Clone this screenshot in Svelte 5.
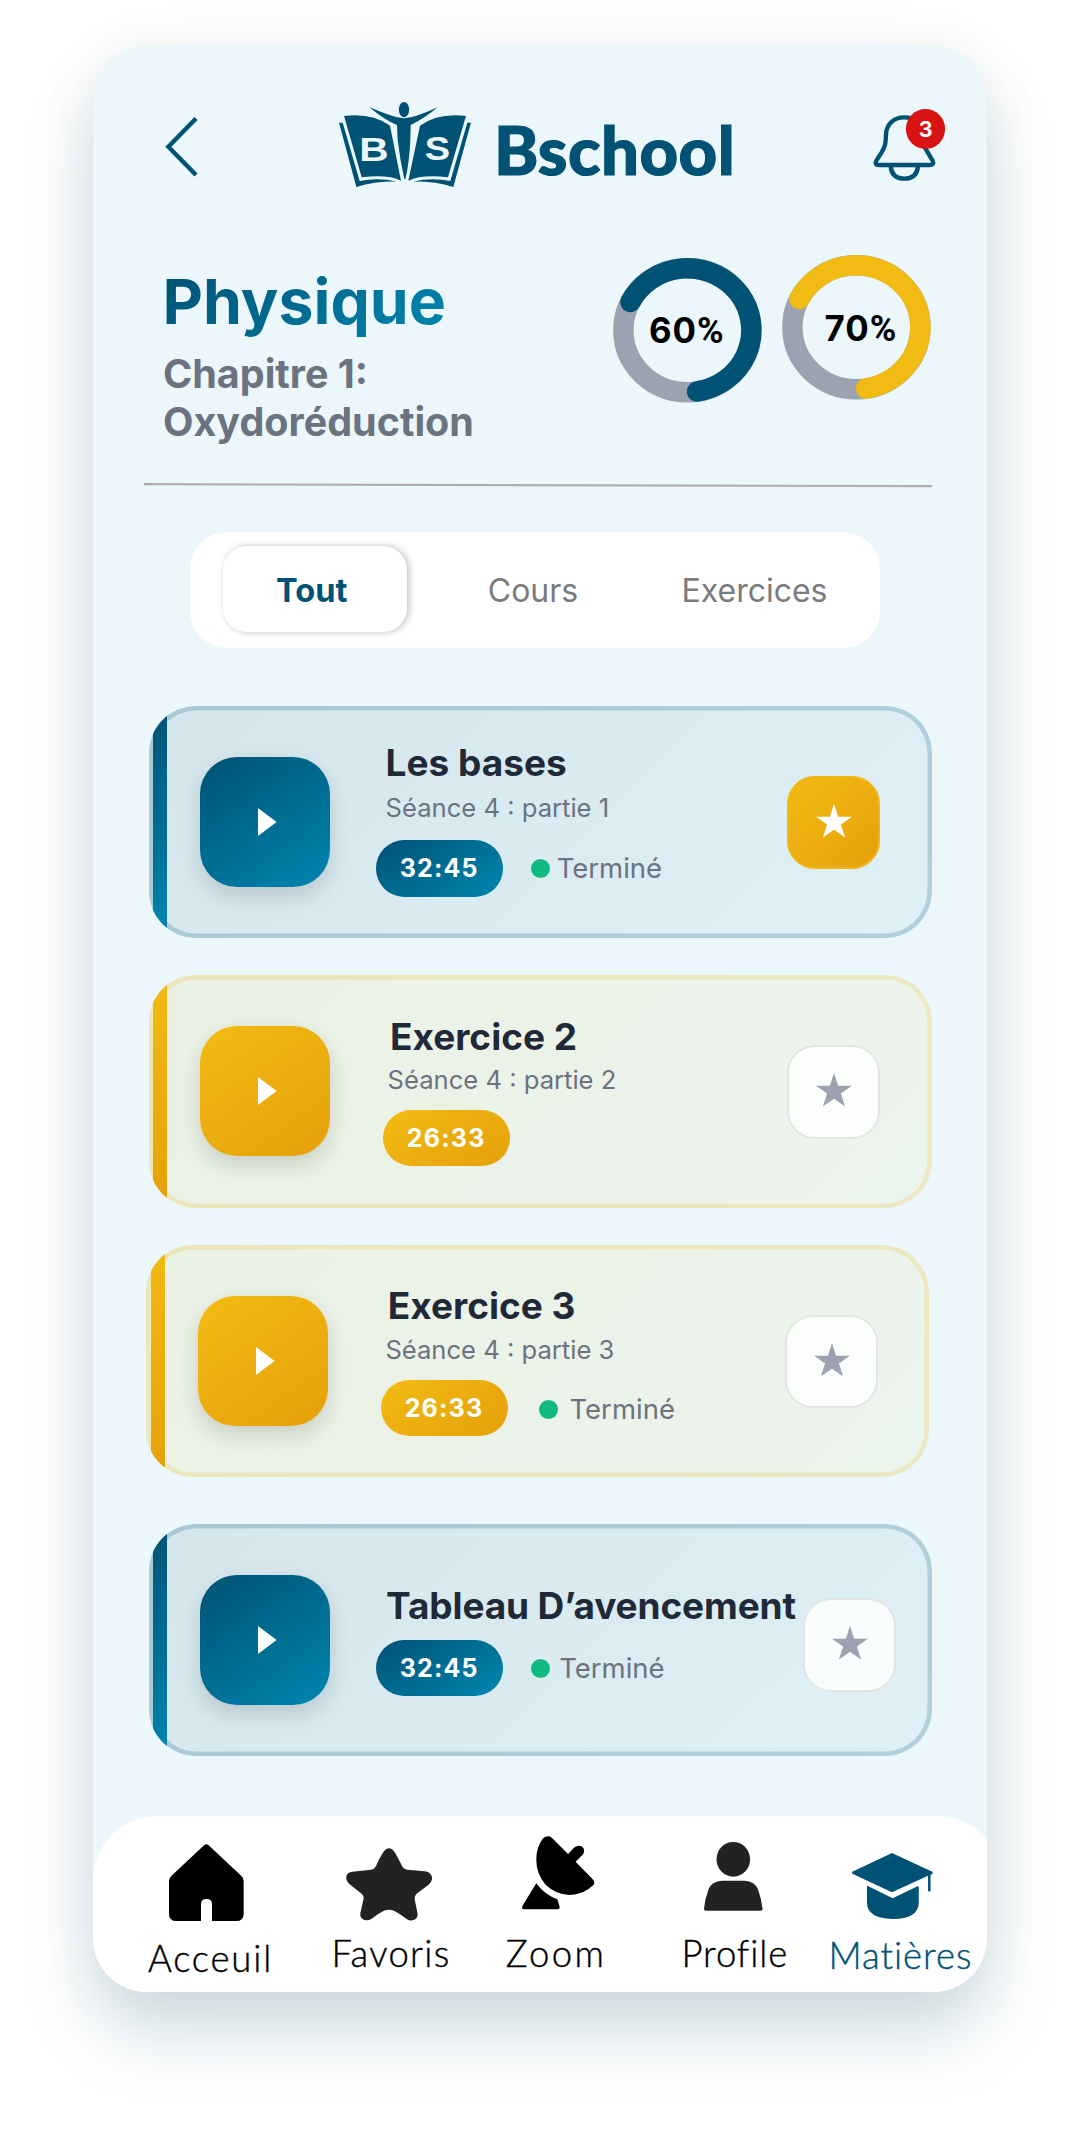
<script>
  const tabs = [
    { label: 'Tout', kind: 'active' },
    { label: 'Cours', kind: 'middle' },
    { label: 'Exercices', kind: 'last' }
  ];

  const lessons = [
    { title: 'Les bases', subtitle: 'Séance 4 : partie 1', time: '32:45', done: true, starred: true, tone: 'blue', variant: 'lesson' },
    { title: 'Exercice 2', subtitle: 'Séance 4 : partie 2', time: '26:33', done: false, starred: false, tone: 'gold', variant: 'exercise' },
    { title: 'Exercice 3', subtitle: 'Séance 4 : partie 3', time: '26:33', done: true, starred: false, tone: 'gold', variant: 'exercise shifted' },
    { title: 'Tableau D’avencement', subtitle: '', time: '32:45', done: true, starred: false, tone: 'blue', variant: 'progress' }
  ];
</script>

<main class="phone">
  <header class="header">
    <button class="back" aria-label="Retour">
      <svg width="32" height="60" viewBox="0 0 32 60"><path d="M30 1.5L2.4 29.8L30 58" fill="none" stroke="#005274" stroke-width="4.4" /></svg>
    </button>
    <svg class="logo" width="132" height="85.3" viewBox="57 36 396 256">
      <g fill="#005274">
        <ellipse cx="252" cy="59" rx="15.5" ry="23" />
        <path d="M148 51Q200 74 232 82Q252 87 272 82Q305 74 354 51Q315 84 272 105L271 150Q268 220 256 267H253Q240 210 233 150L231 105Q190 88 148 51Z" />
        <path d="M72 78Q155 68 210 107L243 272Q205 253 125 262Z" />
        <path d="M438 78Q355 68 300 107L265 272Q305 253 384 262Z" />
        <path d="M57 98H68L119 273Q175 262 232 275Q165 274 109 291Z" />
        <path d="M453 98H442L391 273Q335 262 277 275Q345 274 400 291Z" />
      </g>
      <text class="mono" x="118" y="214" textLength="88" lengthAdjust="spacingAndGlyphs">B</text>
      <text class="mono" x="314" y="211" textLength="76" lengthAdjust="spacingAndGlyphs">S</text>
    </svg>
    <span class="brand">Bschool</span>
    <div class="bell">
      <svg width="63.3" height="67.3" viewBox="940 100 190 202" fill="none" stroke="#005274" stroke-width="13">
        <path d="M1034 110C1000 110 979 133 979 163C978 190 976 198 966 215L950 240Q943 253 957 253H1111Q1125 253 1119 240L1101 210C1092 195 1090 190 1089 163C1089 133 1066 110 1034 110Z" />
        <path d="M993 256C995 284 1012 294 1034 294C1056 294 1073 284 1075 256" />
      </svg>
      <span class="badge">3</span>
    </div>
  </header>

  <section class="summary">
    <div class="heading">
      <h1>Physique</h1>
      <p>Chapitre 1:<br />Oxydoréduction</p>
    </div>
    <div class="ring first">
      <svg width="149" height="145" viewBox="0 0 149 145" fill="none" stroke-width="20.5">
        <ellipse cx="74.4" cy="72.2" rx="64" ry="62" stroke="#9da2b0" />
        <path d="M17.4 44A64 62 0 1 1 84 133.5" stroke="#005274" stroke-linecap="round" />
      </svg>
      <span class="pct">60<span class="sign">%</span></span>
    </div>
    <div class="ring second">
      <svg width="149" height="145" viewBox="0 0 149 145" fill="none" stroke-width="20.5">
        <ellipse cx="74.4" cy="72.2" rx="64" ry="62" stroke="#9da2b0" />
        <path d="M17.4 44A64 62 0 1 1 84 133.5" stroke="#f2bb13" stroke-linecap="round" />
      </svg>
      <span class="pct">70<span class="sign">%</span></span>
    </div>
  </section>

  <svg class="divider" width="788" height="5" viewBox="0 0 788 5"><path d="M0 1.2L788 3.2" stroke="#aeacac" stroke-width="2.2" /></svg>

  <nav class="tabs">
    {#each tabs as tab}
      <button class="tab {tab.kind}">{tab.label}</button>
    {/each}
  </nav>

  <section class="cards">
    {#each lessons as lesson}
      <article class="card {lesson.tone} {lesson.variant}">
        <span class="stripe"></span>
        <button class="play" aria-label="Lire">
          <svg width="19" height="28" viewBox="0 0 19 28"><path d="M0 0L18.6 14L0 28Z" fill="#fff" /></svg>
        </button>
        <div class="body">
          <h2>{lesson.title}</h2>
          {#if lesson.subtitle}<p class="subtitle">{lesson.subtitle}</p>{/if}
          <div class="meta">
            <span class="time">{lesson.time}</span>
            {#if lesson.done}
              <span class="dot"></span>
              <span class="status">Terminé</span>
            {/if}
          </div>
        </div>
        <button class="fav" class:starred={lesson.starred} aria-label="Favori">
          <svg width="36" height="34" viewBox="0 0 36 34"><path d="M18 0L22.2 12.8H36L24.9 20.6L29.1 33.6L18 25.7L6.9 33.6L11.1 20.6L0 12.8H13.8Z" fill="currentColor" /></svg>
        </button>
      </article>
    {/each}
  </section>

  <nav class="bottom">
    <a class="item home" href="#accueil">
      <svg width="74.7" height="77" viewBox="298 161 224 231"><path d="M404 164Q410 159 416 164L516 258Q522 264 522 272V370Q522 392 500 392H427V342Q427 326 410.5 326Q394 326 394 342V392H320Q298 392 298 370V272Q298 264 304 258Z" fill="#000" /></svg>
      <span>Acceuil</span>
    </a>
    <a class="item favoris" href="#favoris">
      <svg width="86.3" height="72.7" viewBox="828 175 259 218"><path d="M937 192Q957 160 977 192Q986 208 998 232Q1002 239 1012 240L1064 245Q1082 247 1086 262Q1088 274 1076 285L1040 312Q1033 318 1034 328L1043 372Q1044 388 1028 392Q1018 394 1010 388Q990 372 972 363Q957 357 942 363Q925 371 905 387Q894 394 884 391Q869 387 871 371L881 326Q882 318 875 312L839 284Q826 273 829 260Q832 247 848 246L902 240Q913 239 917 231Q927 207 937 192Z" fill="#222" /></svg>
      <span>Favoris</span>
    </a>
    <a class="item zoom" href="#zoom">
      <svg width="72.5" height="73.3" viewBox="91 137 203 220" preserveAspectRatio="none">
        <path d="M149 145Q153 139 164 138Q171 137 175 143L220 191L238 171Q250 162 260 170Q269 179 262 192L241 214L291 269Q296 277 291 284Q262 314 224 314Q185 312 157 283Q131 250 131 208Q131 170 149 145Z" />
        <path d="M131 279Q155 314 190 327L196 347Q198 357 190 357H97Q89 357 92 347Z" />
      </svg>
      <span>Zoom</span>
    </a>
    <a class="item profile" href="#profile">
      <svg width="58.6" height="68.7" viewBox="598 156 164 206" preserveAspectRatio="none" fill="#222">
        <ellipse cx="680" cy="208" rx="47" ry="52" />
        <path d="M648 272H712Q740 274 749 298Q759 328 762 356Q762 362 756 362H604Q598 362 598 356Q601 325 611 297Q620 274 648 272Z" />
      </svg>
      <span>Profile</span>
    </a>
    <a class="item matieres" href="#matieres">
      <svg width="80.7" height="66.4" viewBox="1013 190 226 199" preserveAspectRatio="none" fill="#005274">
        <path d="M1125 190L1238 246Q1240 250 1238 253L1233 256V304Q1229 307 1226 304V258L1125 308L1014 252Q1012 249 1014 246Z" />
        <path d="M1056 288L1127 326L1198 289Q1200 290 1200 293V340Q1198 388 1127 388Q1056 386 1055 340V290Z" />
      </svg>
      <span>Matières</span>
    </a>
  </nav>
</main>

<style>
  :global(body) {
    margin: 0;
    background: #fff;
    font-family: Inter, 'Liberation Sans', sans-serif;
  }

  :global(#app) {
    display: flow-root;
    height: 2133px;
    overflow: hidden;
  }

  button {
    padding: 0;
    border: 0;
    background: none;
    font: inherit;
    color: inherit;
  }

  svg {
    display: block;
    flex: none;
    overflow: visible;
  }

  h1,
  h2,
  p {
    margin: 0;
  }

  .phone {
    display: flex;
    flex-direction: column;
    box-sizing: border-box;
    width: 894px;
    height: 1946px;
    margin: 46.4px 0 0 93px;
    overflow: hidden;
    border-radius: 54px;
    background: #ebf7fb;
    box-shadow:
      0 42px 72px rgba(0, 82, 112, 0.18),
      0 6px 64px rgba(0, 0, 0, 0.06);
  }

  .header {
    display: flex;
    align-items: flex-start;
    box-sizing: border-box;
    height: 209px;
    padding: 56px 51px 0 73px;
  }

  .back {
    margin-top: 14.5px;
  }

  .logo {
    margin-left: 141px;
  }

  .mono {
    fill: #ebf7fb;
    font: 700 101px 'Liberation Sans', sans-serif;
  }

  .brand {
    margin: 12px 0 0 23px;
    color: #005274;
    font: 900 67px/70px Lato, sans-serif;
    letter-spacing: 0.5px;
    -webkit-text-stroke: 1.2px #005274;
  }

  .bell {
    position: relative;
    margin: 11.5px 0 0 auto;
  }

  .badge {
    position: absolute;
    top: -4.8px;
    left: 33.2px;
    width: 39.6px;
    height: 39.6px;
    border-radius: 50%;
    background: #d71313;
    color: #fff;
    font-size: 21.5px;
    font-weight: 700;
    line-height: 40px;
    text-align: center;
  }

  .summary {
    display: flex;
    align-items: flex-start;
    height: 228px;
    padding: 0 55.6px 0 69.5px;
  }

  .heading {
    flex: 1;
  }

  h1 {
    width: 290px;
    margin-top: 9.5px;
    background: linear-gradient(135deg, #005274, #0086b0);
    background-clip: text;
    color: transparent;
    font-size: 62.5px;
    font-weight: 700;
    line-height: 72px;
  }

  .heading p {
    margin: 13px 0 0 0.5px;
    color: #6b7280;
    font-size: 39.5px;
    font-weight: 700;
    line-height: 48.6px;
  }

  .ring {
    display: grid;
    place-items: center;
  }

  .ring > * {
    grid-area: 1 / 1;
  }

  .first {
    margin: 2.4px 20.6px 0 0;
  }

  .pct {
    padding-right: 2px;
    color: #000;
    font-size: 34.8px;
    font-weight: 700;
    letter-spacing: 1px;
    line-height: 40px;
  }

  .sign {
    font-family: Roboto, sans-serif;
    font-size: 36px;
    letter-spacing: 0;
  }

  .second .pct {
    padding: 1px 0 0 7px;
  }

  .divider {
    margin-left: 51px;
  }

  .tabs {
    display: flex;
    align-items: center;
    box-sizing: border-box;
    width: 690px;
    height: 116px;
    margin: 43.5px 0 0 97px;
    padding: 0 0 2px 33px;
    border-radius: 37px;
    background: #fff;
  }

  .tab {
    box-sizing: border-box;
    height: 86px;
    padding-top: 2px;
    color: #7b7b7b;
    font-size: 32px;
    line-height: 85px;
  }

  .tab.active {
    width: 183.5px;
    padding-right: 6px;
    border-radius: 24px;
    box-shadow: 2px 0 7px rgba(0, 0, 0, 0.25);
    color: #005274;
    font-size: 32.6px;
    font-weight: 700;
  }

  .tab.middle {
    width: 253px;
  }

  .tab.last {
    width: 190px;
  }

  .cards {
    display: flex;
    flex-direction: column;
    gap: 37.3px;
    margin: 58px 0 0 55.6px;
  }

  .card {
    position: relative;
    display: flex;
    align-items: flex-start;
    box-sizing: border-box;
    width: 783px;
    height: 232.3px;
    overflow: hidden;
    border-radius: 47px;
  }

  .card::before {
    content: '';
    position: absolute;
    inset: 0;
    border-radius: 47px;
  }

  .blue {
    background: linear-gradient(135deg, #d4e6ec, #dff0f7);
  }

  .blue::before {
    box-shadow: inset 0 0 0 4.6px rgba(0, 82, 116, 0.2);
  }

  .gold {
    background: linear-gradient(135deg, #ebf1e3, #ebf4ee);
  }

  .gold::before {
    box-shadow: inset 0 0 0 4.6px rgba(242, 187, 19, 0.2);
  }

  .shifted {
    margin-left: -2.2px;
  }

  .progress {
    margin-top: 9px;
  }

  .stripe {
    position: absolute;
    top: 0;
    bottom: 0;
    left: 4.5px;
    width: 14px;
  }

  .blue .stripe,
  .blue .play,
  .blue .time {
    background: linear-gradient(145deg, #005274, #0086b0);
  }

  .gold .stripe,
  .gold .play,
  .gold .time {
    background: linear-gradient(145deg, #f2bb13, #e5a00a);
  }

  .play {
    display: grid;
    flex: none;
    place-items: center;
    box-sizing: border-box;
    width: 130px;
    height: 130px;
    margin: 51px 0 0 51.2px;
    padding-left: 5px;
    border-radius: 37px;
    box-shadow: 0 9px 22px rgba(0, 0, 0, 0.15);
  }

  .body {
    flex: 1;
    min-width: 0;
    padding: 34.9px 0 0 55.8px;
    white-space: nowrap;
  }

  h2 {
    color: #1f2937;
    font-size: 37px;
    font-weight: 700;
    line-height: 44px;
  }

  .subtitle {
    margin: 7.3px 0 16px 0;
    color: #6b7280;
    font-size: 25.6px;
    line-height: 32px;
  }

  .meta {
    display: flex;
    align-items: center;
    margin-left: -9.4px;
  }

  .time {
    box-sizing: border-box;
    width: 127px;
    height: 56.5px;
    padding-right: 1px;
    border-radius: 28.3px;
    color: #fff;
    font-size: 25px;
    font-weight: 700;
    letter-spacing: 1.2px;
    line-height: 56px;
    text-align: center;
  }

  .dot {
    width: 19px;
    height: 19px;
    margin-left: 28px;
    border-radius: 50%;
    background: #10b981;
  }

  .status {
    margin-left: 6.5px;
    color: #6b7280;
    font-size: 27.5px;
    line-height: 34px;
  }

  .exercise .body {
    padding: 39.3px 0 0 60.2px;
  }

  .exercise .subtitle {
    margin: 5.2px 0 14px -2.4px;
  }

  .exercise .meta {
    margin-left: -6.8px;
  }

  .shifted .dot {
    margin: 3px 0 0 31px;
  }

  .shifted .status {
    margin: 3px 0 0 11.5px;
  }

  .progress .body {
    padding-top: 60.2px;
  }

  .progress h2 {
    margin: 0 0 12px 0.5px;
    letter-spacing: -0.12px;
  }

  .progress .status {
    margin-left: 9px;
  }

  .fav {
    display: grid;
    flex: none;
    place-items: center;
    box-sizing: border-box;
    width: 93px;
    height: 93.4px;
    margin: 69.8px 51.3px 0 0;
    padding-bottom: 3px;
    border: 2.4px solid #e3e4e4;
    border-radius: 28px;
    background: rgba(255, 255, 255, 0.85);
    color: #9da2b0;
  }

  .fav.starred {
    border-color: #f2b511;
    background: linear-gradient(135deg, #f2bb13, #e5a00a);
    color: #fff;
  }

  .progress .fav {
    margin: 74.6px 35.3px 0 0;
  }

  .bottom {
    display: flex;
    flex: none;
    box-sizing: border-box;
    width: 908px;
    height: 176.2px;
    margin-top: auto;
    border-radius: 64px 64px 0 0;
    background: #fff;
  }

  .item {
    display: flex;
    flex: none;
    flex-direction: column;
    align-items: center;
    box-sizing: border-box;
    color: #000;
    font: 300 36.5px/45px Lato, sans-serif;
    text-decoration: none;
    -webkit-text-stroke: 0.4px currentColor;
  }

  .item span {
    padding-left: 2px;
  }

  .home {
    width: 233px;
    padding-top: 27.4px;
    letter-spacing: 1.8px;
  }

  .home svg {
    margin: 0 6px 15px 0;
  }

  .favoris {
    width: 128px;
    padding-top: 32px;
    letter-spacing: 1.3px;
  }

  .favoris svg {
    margin: 0 2px 10px 0;
  }

  .zoom {
    width: 202px;
    padding-top: 19.4px;
    letter-spacing: 2.4px;
  }

  .zoom svg {
    margin: 0 0 22px 7px;
  }

  .profile {
    width: 155.6px;
    padding-top: 25.7px;
    letter-spacing: 0.9px;
  }

  .profile svg {
    margin: 0 2px 20.4px 0;
  }

  .matieres {
    width: 176.8px;
    padding-top: 37px;
    color: #005274;
    letter-spacing: 1px;
  }

  .matieres svg {
    margin: 0 16px 13.7px 0;
  }

  .matieres span {
    padding-left: 1px;
  }
</style>
